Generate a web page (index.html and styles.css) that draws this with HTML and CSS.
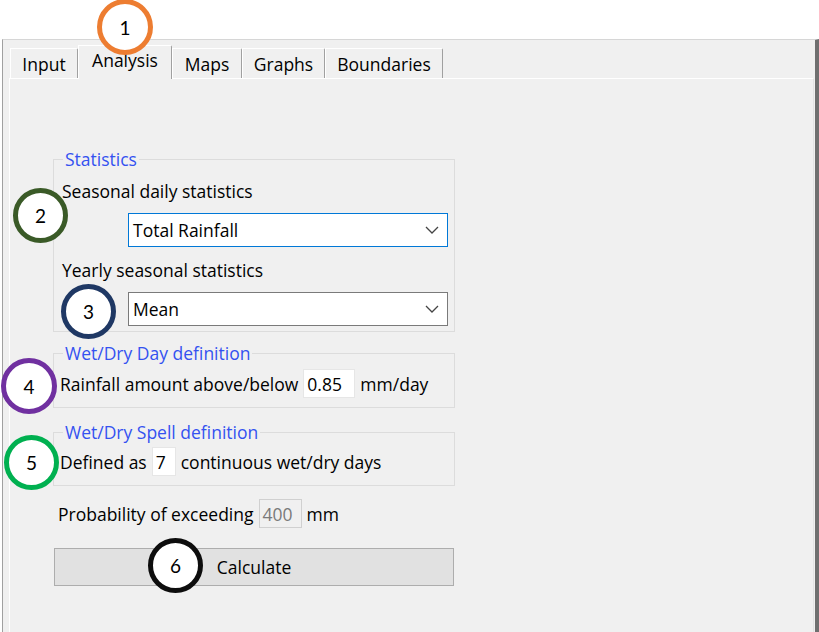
FILE: index.html
```html
<!DOCTYPE html>
<html>
<head>
<meta charset="utf-8">
<link rel="stylesheet" href="styles.css">
</head>
<body>
<div class="page">
  <div class="topspace"></div>
  <div class="window">
    <div class="tabs">
      <div class="tab tab-input">Input</div>
      <div class="tab tab-analysis active">Analysis</div>
      <div class="tab tab-maps">Maps</div>
      <div class="tab tab-graphs">Graphs</div>
      <div class="tab tab-boundaries">Boundaries</div>
    </div>
    <div class="panel">
      <fieldset class="group group-stats">
        <legend>Statistics</legend>
        <div class="label">Seasonal daily statistics</div>
        <div class="combo combo-focus"><span>Total Rainfall</span>
          <svg class="chev" width="14" height="8" viewBox="0 0 14 8"><polyline points="1,1 7,7 13,1" fill="none" stroke="#444" stroke-width="1.3"/></svg>
        </div>
        <div class="label label-second">Yearly seasonal statistics</div>
        <div class="combo"><span>Mean</span>
          <svg class="chev" width="14" height="8" viewBox="0 0 14 8"><polyline points="1,1 7,7 13,1" fill="none" stroke="#444" stroke-width="1.3"/></svg>
        </div>
      </fieldset>
      <fieldset class="group group-day">
        <legend>Wet/Dry Day definition</legend>
        <div class="row">
          <span>Rainfall amount above/below</span>
          <div class="field field-amount">0.85</div>
          <span>mm/day</span>
        </div>
      </fieldset>
      <fieldset class="group group-spell">
        <legend>Wet/Dry Spell definition</legend>
        <div class="row">
          <span>Defined as</span>
          <div class="field field-days">7</div>
          <span>continuous wet/dry days</span>
        </div>
      </fieldset>
      <div class="row row-prob">
        <span>Probability of exceeding</span>
        <div class="field field-disabled">400</div>
        <span>mm</span>
      </div>
      <div class="button">Calculate</div>
    </div>
  </div>
  <div class="mark mark1">1</div>
  <div class="mark mark2">2</div>
  <div class="mark mark3">3</div>
  <div class="mark mark4">4</div>
  <div class="mark mark5">5</div>
  <div class="mark mark6">6</div>
</div>
</body>
</html>
```
FILE: styles.css
```css
html, body {
  margin: 0;
  padding: 0;
  background: #ffffff;
}
body {
  font-family: "Open Sans", "Noto Sans", sans-serif;
  font-size: 17.5px;
  color: #000;
}
.page {
  position: relative;
  width: 819px;
  height: 632px;
  overflow: hidden;
  display: flex;
  flex-direction: column;
}
.topspace {
  height: 39px;
  flex: none;
}
.window {
  flex: 1;
  margin-left: 2px;
  border-left: 1px solid #a0a0a0;
  border-right: 4px solid #6f6f6f;
  border-top: 1px solid #d6d6d6;
  background: #f0f0f0;
  display: flex;
  flex-direction: column;
}
.tabs {
  height: 38px;
  flex: none;
  display: flex;
  align-items: flex-end;
  padding-left: 7px;
  position: relative;
  z-index: 1;
}
.tab {
  box-sizing: border-box;
  height: 30px;
  border-top: 1px solid #fff;
  border-left: 1px solid #fff;
  border-right: 1px solid #a0a0a0;
  border-top-right-radius: 2px;
  display: flex;
  align-items: center;
  justify-content: center;
  padding-top: 1px;
  background: #f0f0f0;
}
.tab.active {
  height: 34px;
  margin-bottom: -1px;
  padding-top: 0;
  padding-bottom: 5px;
}
.tab-input { width: 68px; }
.tab-analysis { width: 94px; }
.tab-maps { width: 70px; }
.tab-graphs { width: 83px; }
.tab-boundaries { width: 118px; }
.panel {
  flex: 1;
  margin-left: 6px;
  margin-right: 1px;
  border-top: 1px solid #fff;
  border-left: 1px solid #fff;
  border-right: 1px solid #e3e3e3;
  padding: 70px 0 0 43px;
  display: flex;
  flex-direction: column;
  align-items: flex-start;
}
.group {
  box-sizing: border-box;
  width: 402px;
  margin: 0;
  padding: 0 0 0 8px;
  border: 1px solid #dcdcdc;
  min-width: 0;
}
.group legend {
  color: #3452f0;
  line-height: 20px;
  padding: 0 2px;
  margin-left: 1px;
}
.label {
  line-height: 20px;
  margin-top: 12px;
}
.label-second {
  margin-top: 13px;
}
.combo {
  box-sizing: border-box;
  width: 320px;
  height: 34px;
  margin-top: 12px;
  margin-left: 66px;
  background: #fff;
  border: 1px solid #7a7a7a;
  display: flex;
  align-items: center;
  justify-content: space-between;
  padding: 0 8px 0 4px;
}
.combo-focus {
  border-color: #0078d7;
}
.group-stats {
  padding-bottom: 5px;
}
.group-day {
  margin-top: 11px;
  padding-bottom: 9px;
}
.group-spell {
  margin-top: 14px;
  padding-bottom: 9px;
}
.row {
  display: flex;
  align-items: center;
  gap: 5px;
  margin-left: -2px;
  line-height: 20px;
}
.group-day .row { margin-top: 6px; }
.group-spell .row { margin-top: 5px; }
.field {
  box-sizing: border-box;
  height: 29px;
  background: #fff;
  border: 1px solid #e6e6e6;
  display: flex;
  align-items: center;
  padding-left: 3px;
}
.field-amount { width: 52px; }
.field-days { width: 24px; }
.field-disabled {
  width: 43px;
  background: #f0f0f0;
  border-color: #d0d0d0;
  color: #7a7a7a;
}
.row-prob {
  margin-top: 13px;
  margin-left: 5px;
}
.button {
  box-sizing: border-box;
  width: 400px;
  height: 38px;
  margin-top: 20px;
  margin-left: 1px;
  background: #e1e1e1;
  border: 1px solid #adadad;
  display: flex;
  align-items: center;
  justify-content: center;
}
.mark {
  position: absolute;
  box-sizing: border-box;
  width: 55px;
  height: 55px;
  border: 5px solid #000;
  border-radius: 50%;
  background: #fff;
  display: flex;
  align-items: center;
  justify-content: center;
  font-family: Lato, "Open Sans", sans-serif;
  font-size: 19px;
  color: #000;
  z-index: 5;
}
.mark1 { left: 97px; top: -1px; width: 56px; height: 56px; border-color: #ed7d31; }
.mark2 { left: 13px; top: 188px; border-color: #3a5a27; }
.mark3 { left: 61px; top: 284px; border-color: #1f3864; }
.mark4 { left: 1px; top: 358px; width: 56px; height: 56px; border-color: #7030a0; }
.mark5 { left: 4px; top: 435px; border-color: #00b050; }
.mark6 { left: 148px; top: 538px; border-color: #0d0d0d; }
```
